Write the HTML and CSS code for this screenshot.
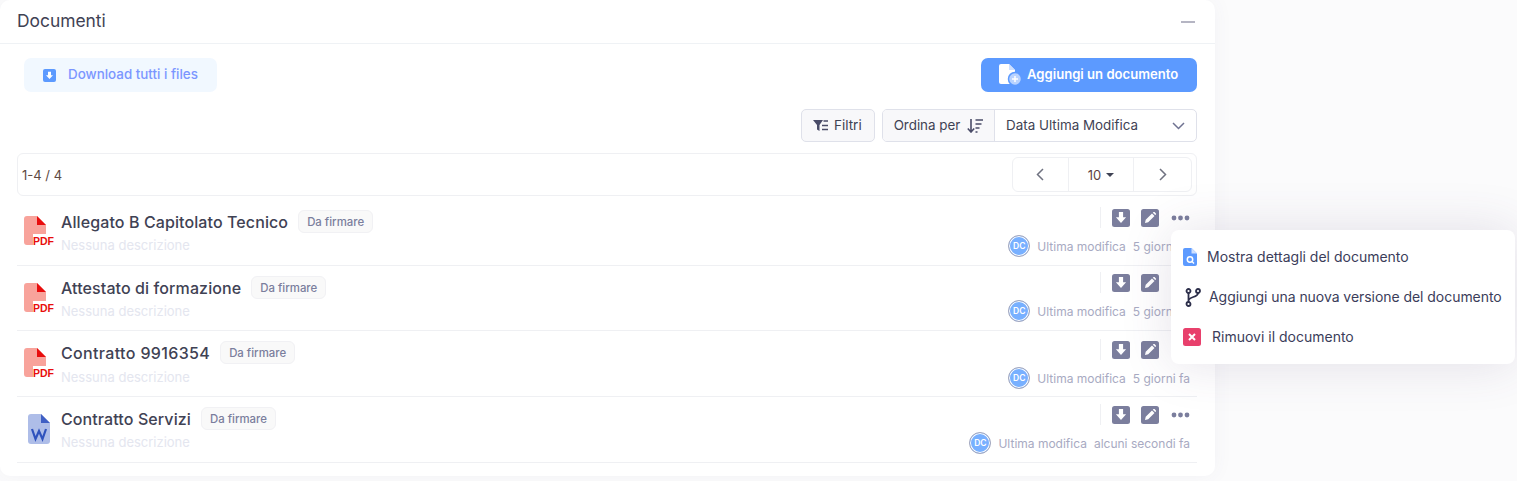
FILE: index.html
```html
<!DOCTYPE html>
<html lang="it">
<head>
  <meta charset="UTF-8">
  <title>Documenti</title>
  <link rel="stylesheet" href="styles.css">
</head>
<body>
  <svg class="defs" width="0" height="0">
    <symbol id="ico-down" viewBox="0 0 18 18">
      <rect width="18" height="18" rx="2.5" fill="#7b7e9d"/>
      <path d="M6.900 3h4.200v5.200h3L9 14 3.900 8.200h3z" fill="#fff"/>
    </symbol>
    <symbol id="ico-edit" viewBox="0 0 18 18">
      <rect width="18" height="18" rx="2.5" fill="#7b7e9d"/>
      <path d="M4 14l.7-3.2 6.300-6.300 2.500 2.500-6.300 6.300zM11.800 3.700l.7-.6c.4-.3.8-.3 1.100 0l1.300 1.300c.3.3.3.7 0 1l-.7.7z" fill="#fff"/>
    </symbol>
    <symbol id="ico-dots" viewBox="0 0 19 6">
      <circle cx="3" cy="3" r="2.4" fill="#7b7e9d"/>
      <circle cx="9.5" cy="3" r="2.4" fill="#7b7e9d"/>
      <circle cx="16" cy="3" r="2.4" fill="#7b7e9d"/>
    </symbol>
    <symbol id="ico-pdf" viewBox="0 0 22 30">
      <path d="M3 0h10l9 9v9H9v11H3a3 3 0 0 1-3-3V3a3 3 0 0 1 3-3z" fill="#f8a39b"/>
      <path d="M13 0l9 9h-9z" fill="#e80d0d"/>
    </symbol>
    <symbol id="ico-word" viewBox="0 0 22 30">
      <path d="M3 0h10l9 9v18a3 3 0 0 1-3 3H3a3 3 0 0 1-3-3V3a3 3 0 0 1 3-3z" fill="#aebde8"/>
      <path d="M13 0l9 9h-9z" fill="#3f5fc4"/>
      <path d="M4 15l3.500 10 3.500-8 3.500 8 3.500-10" fill="none" stroke="#2f52bd" stroke-width="2.200"/>
    </symbol>
  </svg>

  <div class="card">
    <div class="card-head">
      <h2>Documenti</h2>
      <span class="collapse"></span>
    </div>

    <div class="card-body">
      <div class="top-actions">
        <button class="btn-light">
          <svg width="13" height="13" viewBox="0 0 13 13">
            <rect width="13" height="13" rx="2" fill="#5c9aff"/>
            <path d="M5 2.800h3v3.500h2L6.500 10 3 6.300h2z" fill="#fff"/>
          </svg>
          <span>Download tutti i files</span>
        </button>
        <button class="btn-primary">
          <svg width="23" height="22" viewBox="0 0 23 22">
            <path d="M2 0h8l6 6v14H2a2 2 0 0 1-2-2V2a2 2 0 0 1 2-2z" fill="#fff"/>
            <path d="M10 0l6 6h-6z" fill="#cfe0ff"/>
            <circle cx="16" cy="15" r="6.500" fill="#b9d3ff" stroke="#5c9aff" stroke-width="1.500"/>
            <path d="M16 12v6M13 15h6" stroke="#fff" stroke-width="1.500"/>
          </svg>
          <span>Aggiungi un documento</span>
        </button>
      </div>

      <div class="filters">
        <button class="btn-filter">
          <svg width="15" height="11" viewBox="0 0 15 11">
            <path d="M0 0h10L6.500 5v6L4 9.500V5z" fill="#4a4c68"/>
            <path d="M10.500 1H15M9 5.500h6M9 9.500h6" stroke="#4a4c68" stroke-width="1.600"/>
          </svg>
          <span>Filtri</span>
        </button>
        <div class="sort-group">
          <span class="sort-label">
            <span>Ordina per</span>
            <svg width="16" height="14" viewBox="0 0 16 14">
              <path d="M4 0v12.500M.8 9.500L4 13l3.200-3.500" fill="none" stroke="#4a4c68" stroke-width="1.600"/>
              <path d="M8.500 1H16M8.500 5h6M8.500 9h4M8.500 13h2" stroke="#4a4c68" stroke-width="1.600"/>
            </svg>
          </span>
          <span class="sort-value">
            <span>Data Ultima Modifica</span>
            <svg width="13" height="8" viewBox="0 0 13 8">
              <path d="M1 1l5.500 5.500L12 1" fill="none" stroke="#6f7291" stroke-width="1.500"/>
            </svg>
          </span>
        </div>
      </div>

      <div class="pager-bar">
        <span class="count">1-4 / 4</span>
        <div class="pager">
          <span class="pager-cell">
            <svg width="8" height="13" viewBox="0 0 8 13"><path d="M7 1L1.500 6.500 7 12" fill="none" stroke="#6f7280" stroke-width="1.500"/></svg>
          </span>
          <span class="pager-cell pager-size">10 <i class="caret"></i></span>
          <span class="pager-cell">
            <svg width="8" height="13" viewBox="0 0 8 13"><path d="M1 1l5.500 5.500L1 12" fill="none" stroke="#6f7280" stroke-width="1.500"/></svg>
          </span>
        </div>
      </div>

      <div class="doc first">
        <div class="doc-icon"><div class="file"><svg width="22" height="30"><use href="#ico-pdf"/></svg><b>PDF</b></div></div>
        <div class="doc-main">
          <div class="doc-title"><span>Allegato B Capitolato Tecnico</span><em>Da firmare</em></div>
          <div class="doc-desc">Nessuna descrizione</div>
        </div>
        <div class="doc-side">
          <div class="doc-actions">
            <svg width="18" height="18"><use href="#ico-down"/></svg>
            <svg width="18" height="18"><use href="#ico-edit"/></svg>
            <svg class="dots" width="19" height="6"><use href="#ico-dots"/></svg>
          </div>
          <div class="doc-meta"><span class="avatar">DC</span><span>Ultima modifica</span><span>5 giorni fa</span></div>
        </div>
      </div>

      <div class="doc">
        <div class="doc-icon"><div class="file"><svg width="22" height="30"><use href="#ico-pdf"/></svg><b>PDF</b></div></div>
        <div class="doc-main">
          <div class="doc-title"><span>Attestato di formazione</span><em>Da firmare</em></div>
          <div class="doc-desc">Nessuna descrizione</div>
        </div>
        <div class="doc-side">
          <div class="doc-actions">
            <svg width="18" height="18"><use href="#ico-down"/></svg>
            <svg width="18" height="18"><use href="#ico-edit"/></svg>
            <svg class="dots" width="19" height="6"><use href="#ico-dots"/></svg>
          </div>
          <div class="doc-meta"><span class="avatar">DC</span><span>Ultima modifica</span><span>5 giorni fa</span></div>
        </div>
      </div>

      <div class="doc third">
        <div class="doc-icon"><div class="file"><svg width="22" height="30"><use href="#ico-pdf"/></svg><b>PDF</b></div></div>
        <div class="doc-main">
          <div class="doc-title"><span class="digits">Contratto 9916354</span><em>Da firmare</em></div>
          <div class="doc-desc">Nessuna descrizione</div>
        </div>
        <div class="doc-side">
          <div class="doc-actions">
            <svg width="18" height="18"><use href="#ico-down"/></svg>
            <svg width="18" height="18"><use href="#ico-edit"/></svg>
            <svg class="dots" width="19" height="6"><use href="#ico-dots"/></svg>
          </div>
          <div class="doc-meta"><span class="avatar">DC</span><span>Ultima modifica</span><span>5 giorni fa</span></div>
        </div>
      </div>

      <div class="doc fourth">
        <div class="doc-icon word"><div class="file"><svg width="22" height="30"><use href="#ico-word"/></svg></div></div>
        <div class="doc-main">
          <div class="doc-title"><span>Contratto Servizi</span><em>Da firmare</em></div>
          <div class="doc-desc">Nessuna descrizione</div>
        </div>
        <div class="doc-side">
          <div class="doc-actions">
            <svg width="18" height="18"><use href="#ico-down"/></svg>
            <svg width="18" height="18"><use href="#ico-edit"/></svg>
            <svg class="dots" width="19" height="6"><use href="#ico-dots"/></svg>
          </div>
          <div class="doc-meta"><span class="avatar">DC</span><span>Ultima modifica</span><span>alcuni secondi fa</span></div>
        </div>
      </div>
    </div>
  </div>

  <div class="menu">
    <div class="menu-item">
      <svg width="14" height="18" viewBox="0 0 14 18">
        <path d="M2 0h6.500L14 5.500V16a2 2 0 0 1-2 2H2a2 2 0 0 1-2-2V2a2 2 0 0 1 2-2z" fill="#5c9aff"/>
        <path d="M8.500 0L14 5.500H8.500z" fill="#cfe0ff"/>
        <circle cx="7" cy="11.500" r="2.700" fill="none" stroke="#fff" stroke-width="1.500"/>
        <path d="M9 13.500l2 2" stroke="#fff" stroke-width="1.500"/>
      </svg>
      <span>Mostra dettagli del documento</span>
    </div>
    <div class="menu-item branch">
      <svg width="16" height="19" viewBox="0 0 16 19">
        <g fill="none" stroke="#2c2e4a" stroke-width="1.800">
          <circle cx="3.500" cy="3" r="2"/>
          <circle cx="13" cy="3" r="2"/>
          <circle cx="3.500" cy="16" r="2"/>
          <path d="M3.500 5v9M13 5c0 5-9.500 3-9.500 8"/>
        </g>
      </svg>
      <span>Aggiungi una nuova versione del documento</span>
    </div>
    <div class="menu-item remove">
      <svg width="18" height="18" viewBox="0 0 18 18">
        <rect width="18" height="18" rx="2.500" fill="#e8406c"/>
        <path d="M6 6l6 6M12 6l-6 6" stroke="#fff" stroke-width="2"/>
      </svg>
      <span>Rimuovi il documento</span>
    </div>
  </div>
</body>
</html>
```

FILE: styles.css
```css
* {
  box-sizing: border-box;
}
html, body {
  height: 481px;
  overflow: hidden;
}
body {
  margin: 0;
  position: relative;
  font-family: 'Inter', 'Liberation Sans', sans-serif;
  color: #3f4254;
  background: #fbfbfc;
}
.defs {
  position: absolute;
}
button {
  font-family: inherit;
  border: none;
}
.card {
  width: 1215px;
  height: 476px;
  background: #fff;
  border-radius: 10px;
  box-shadow: 0 0 20px rgba(76, 87, 125, 0.05);
}
.card-head {
  height: 44px;
  padding: 0 20px 2px 17px;
  display: flex;
  align-items: center;
  justify-content: space-between;
  border-bottom: 1px solid #eff2f5;
}
.card-head h2 {
  margin: 0;
  font-size: 17.4px;
  font-weight: 400;
  color: #3f4254;
}
.collapse {
  width: 14px;
  height: 2px;
  margin-top: 3px;
  background: #b5b5c3;
}
.card-body {
  padding: 14px 18px 0 17px;
}
.top-actions {
  display: flex;
  justify-content: space-between;
  padding-left: 7px;
}
.btn-light,
.btn-primary {
  height: 34px;
  border-radius: 7px;
  display: flex;
  align-items: center;
  font-weight: 500;
}
.btn-light span,
.btn-primary span {
  margin-bottom: 2px;
}
.btn-light {
  width: 193px;
  padding-left: 19px;
  gap: 12px;
  font-size: 13.4px;
  background: #f1f8ff;
  color: #7b96ff;
}
.btn-primary {
  width: 216px;
  padding-left: 18px;
  gap: 5px;
  font-size: 13.1px;
  background: #5c9aff;
  color: #fff;
  font-weight: 600;
}
.filters {
  display: flex;
  justify-content: flex-end;
  gap: 7px;
  margin-top: 17px;
}
.btn-filter {
  width: 74px;
  height: 33px;
  padding: 0 0 0 11px;
  display: flex;
  align-items: center;
  gap: 6px;
  background: #f8f8fa;
  border: 1px solid #dfe1ea;
  border-radius: 5px;
  font-size: 13.5px;
  color: #3f4254;
}
.sort-group {
  width: 315px;
  height: 33px;
  display: flex;
  border: 1px solid #dfe1ea;
  border-radius: 5px;
  font-size: 13.4px;
  overflow: hidden;
}
.btn-filter span,
.sort-group span span {
  margin-bottom: 1px;
}
.sort-label {
  width: 112px;
  display: flex;
  align-items: center;
  justify-content: center;
  gap: 7px;
  background: #f8f8fa;
  border-right: 1px solid #dfe1ea;
}
.sort-value {
  flex: 1;
  display: flex;
  align-items: center;
  justify-content: space-between;
  padding: 0 11px 0 11px;
}
.pager-bar {
  height: 43px;
  margin-top: 11px;
  display: flex;
  align-items: center;
  justify-content: space-between;
  padding: 0 4px;
  border: 1px solid #eff0f3;
  border-radius: 6px;
}
.count {
  font-size: 13px;
  color: #5e4a42;
}
.pager {
  width: 180px;
  height: 35px;
  display: flex;
  border: 1px solid #eff0f3;
  border-radius: 6px;
}
.pager-cell {
  width: 55px;
  display: flex;
  align-items: center;
  justify-content: center;
}
.pager-cell:last-child {
  width: 57px;
}
.pager-size {
  width: 67px;
  gap: 5px;
  font-size: 13px;
  color: #5e3f3f;
  border-left: 1px solid #eff0f3;
  border-right: 1px solid #eff0f3;
}
.caret {
  width: 0;
  height: 0;
  border: 4px solid transparent;
  border-top-color: #3f4254;
  border-bottom: 0;
}
.doc {
  height: 66px;
  display: flex;
  border-bottom: 1px solid #eff0f3;
  padding-right: 7px;
}
.doc.first {
  height: 70px;
}
.doc:nth-child(5) {
  height: 65px;
}
.doc-icon {
  width: 44px;
  flex: none;
  padding: 17px 0 0 7px;
}
.first .doc-icon {
  padding-top: 20px;
}
.doc-icon.word {
  padding-left: 11px;
}
.file {
  position: relative;
  width: 22px;
  height: 30px;
}
.file svg {
  display: block;
}
.file b {
  position: absolute;
  left: 9px;
  bottom: 0;
  font-family: 'Liberation Sans', sans-serif;
  font-size: 10.5px;
  font-weight: 700;
  color: #e80d0d;
  line-height: 10px;
}
.doc-main {
  flex: 1;
  padding-top: 10px;
}
.first .doc-main {
  padding-top: 14px;
}
.doc-title {
  display: flex;
  align-items: center;
  gap: 10px;
}
.doc-title span {
  font-size: 16px;
  letter-spacing: 0.1px;
  font-weight: 500;
  color: #3f4254;
}
.doc-title .digits {
  letter-spacing: 0.35px;
}
.doc-title em {
  height: 23px;
  padding: 0 8px;
  display: flex;
  align-items: center;
  font-style: normal;
  font-size: 11.4px;
  font-weight: 500;
  color: #7b7e9d;
  background: #f9f9f9;
  border: 1px solid #f1f1f4;
  border-radius: 6px;
}
.doc-desc {
  margin-top: 4px;
  font-size: 13px;
  color: #e4e6ef;
}
.third .doc-desc {
  margin-top: 5px;
}
.doc-side {
  padding-top: 6px;
  display: flex;
  flex-direction: column;
  align-items: flex-end;
}
.first .doc-side {
  padding-top: 11px;
}
.third .doc-side {
  padding-top: 8px;
}
.fourth .doc-side {
  padding-top: 7px;
}
.doc-actions {
  width: 90px;
  height: 21px;
  padding-left: 11px;
  display: flex;
  align-items: center;
  gap: 11px;
  border-left: 1px solid #eff0f3;
}
.dots {
  margin-left: 1px;
}
.doc-meta {
  display: flex;
  align-items: center;
  gap: 7px;
  margin-top: 7px;
  font-size: 12px;
  color: #a8aac2;
}
.avatar {
  width: 22px;
  height: 22px;
  margin-left: -1px;
  border-radius: 50%;
  display: flex;
  align-items: center;
  justify-content: center;
  font-size: 8.5px;
  font-weight: 600;
  color: #fff;
  background: #78b0ff;
  border: 1px solid #a5a8bd;
  box-shadow: inset 0 0 0 1px #fff;
}
.menu {
  position: absolute;
  left: 1171px;
  top: 230px;
  width: 344px;
  height: 134px;
  padding: 7px 0 0 12px;
  background: #fff;
  border-radius: 8px;
  box-shadow: 0 0 50px rgba(82, 63, 105, 0.15);
  font-size: 14px;
  color: #3b3d5a;
}
.menu-item {
  height: 40px;
  display: flex;
  align-items: center;
  gap: 10px;
}
.menu-item span {
  margin-bottom: 1px;
}
.menu-item.branch {
  padding-left: 2px;
  gap: 8px;
  letter-spacing: -0.05px;
}
.menu-item.remove {
  gap: 11px;
}
```
